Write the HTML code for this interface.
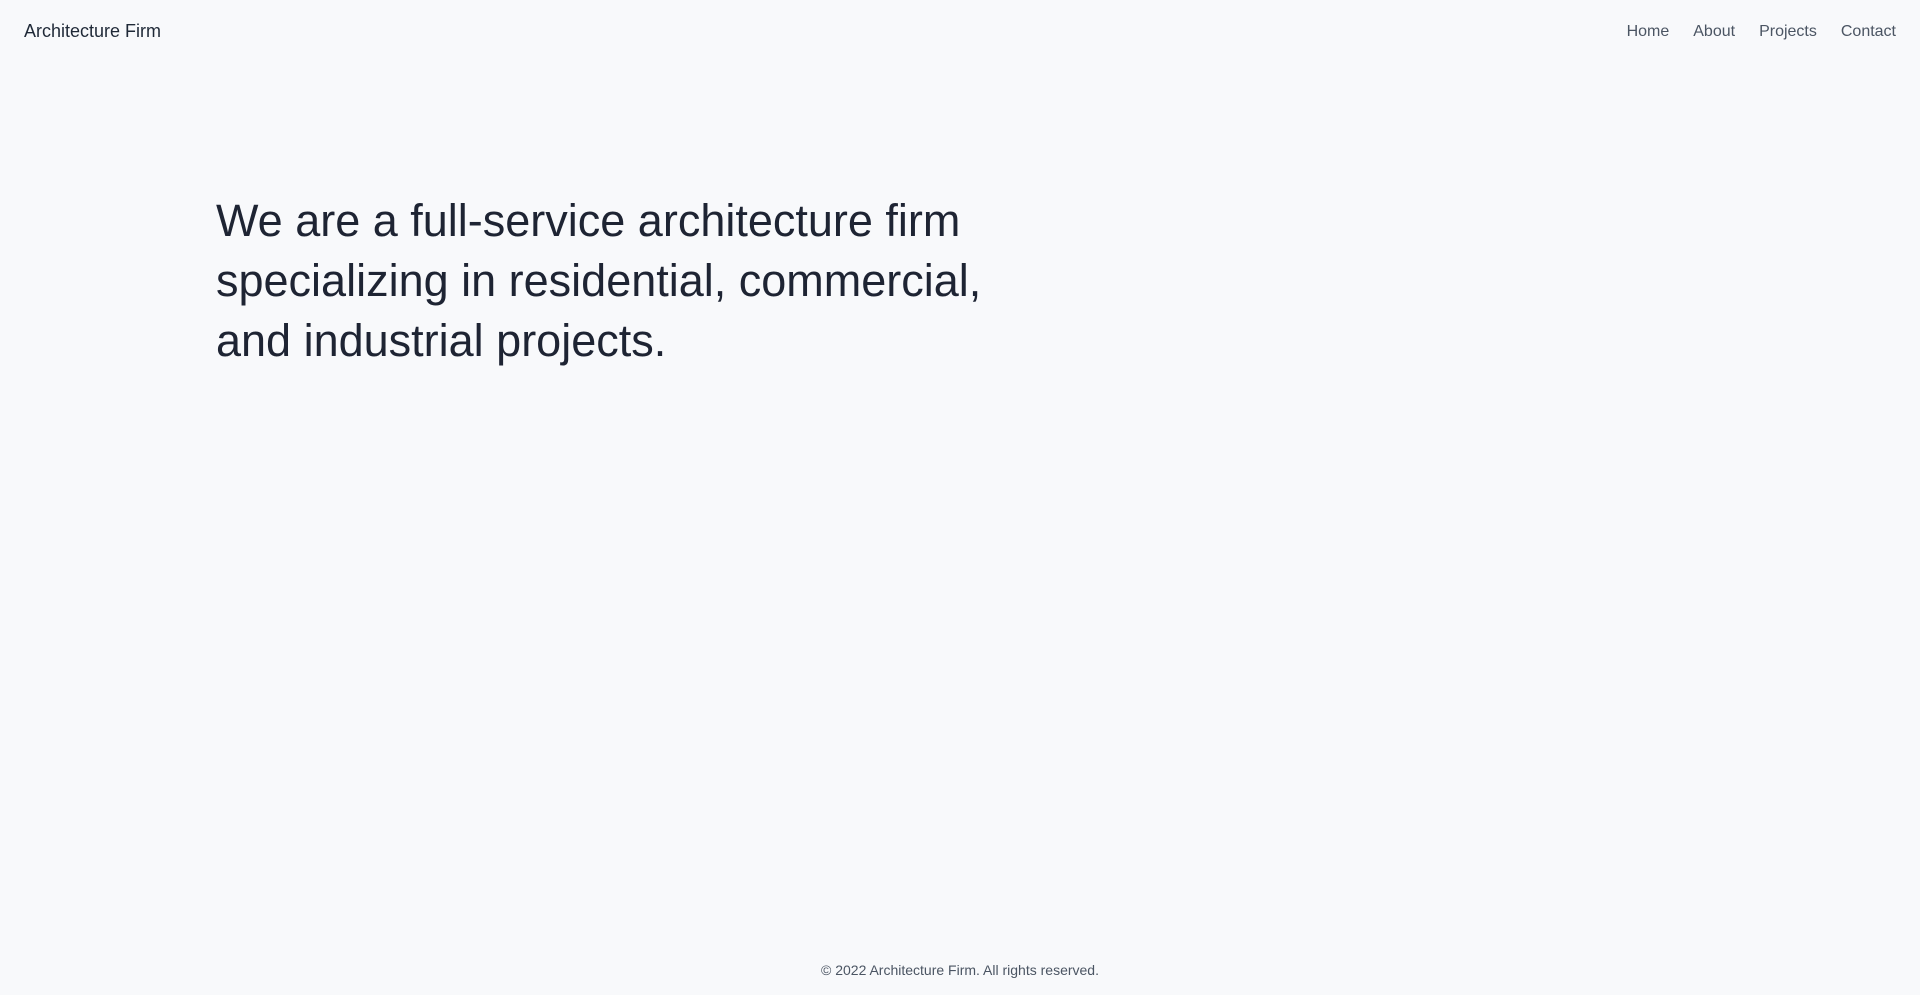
<!DOCTYPE html>
<html>
<head>
<meta charset="utf-8">
<style>
html,body{margin:0;padding:0;}
body{width:1920px;height:995px;background:#f8f9fb;font-family:"Liberation Sans",sans-serif;color:#1f2937;position:relative;overflow:hidden;}
.logo{position:absolute;left:24px;top:21px;font-size:18px;color:#1f2937;}
nav{position:absolute;right:24px;top:23px;font-size:16px;color:#4b5563;}
nav span{margin-left:24px;}
h1{position:absolute;left:216px;top:191px;margin:0;font-weight:300;font-size:45px;line-height:60px;color:#1e2433;white-space:nowrap;letter-spacing:0px;}
footer{position:absolute;left:0;width:100%;top:962px;text-align:center;font-size:14px;color:#4b5563;}
</style>
</head>
<body>
<div class="logo">Architecture Firm</div>
<nav><span>Home</span><span>About</span><span>Projects</span><span>Contact</span></nav>
<h1>We are a full-service architecture firm<br>specializing in residential, commercial,<br>and industrial projects.</h1>
<footer>© 2022 Architecture Firm. All rights reserved.</footer>
</body>
</html>
